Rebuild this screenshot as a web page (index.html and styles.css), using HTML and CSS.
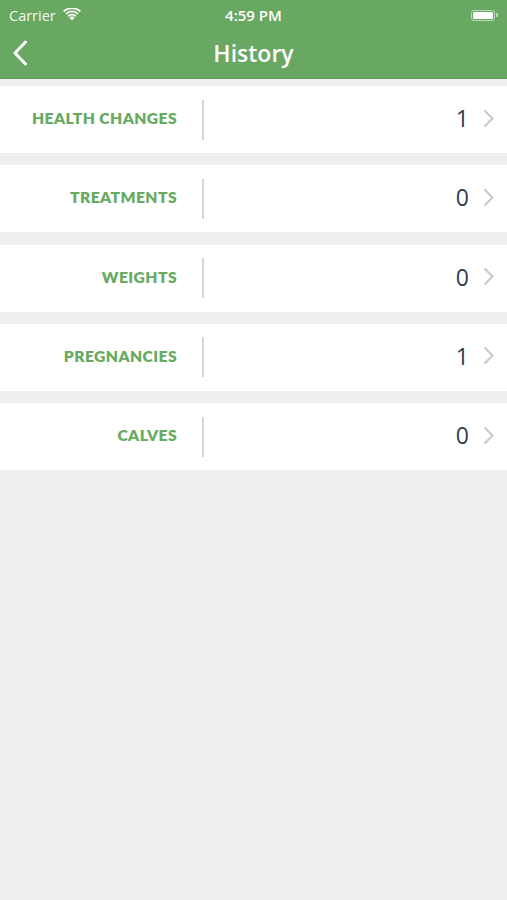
FILE: index.html
```html
<!DOCTYPE html>
<html lang="en">
<head>
    <meta charset="UTF-8">
    <meta name="viewport" content="width=device-width, initial-scale=1.0">
    <title>History</title>
    <link rel="stylesheet" href="styles.css">
</head>
<body>
    <div class="header">
        <div class="status-bar">
            <div class="status-left">
                <span>Carrier</span>
                <svg class="wifi" width="18" height="13" viewBox="0 0 18 13">
                    <path d="M9 12.5 L6.4 9.6 A3.8 3.8 0 0 1 11.6 9.6 Z" fill="#fff"/>
                    <path d="M4.6 7.6 A6.4 6.4 0 0 1 13.4 7.6 L12.2 8.9 A4.6 4.6 0 0 0 5.8 8.9 Z" fill="#fff"/>
                    <path d="M2.3 5.2 A9.8 9.8 0 0 1 15.7 5.2 L14.5 6.5 A8 8 0 0 0 3.5 6.5 Z" fill="#fff"/>
                    <path d="M0 2.8 A13.2 13.2 0 0 1 18 2.8 L16.8 4.1 A11.4 11.4 0 0 0 1.2 4.1 Z" fill="#fff"/>
                </svg>
            </div>
            <div class="status-time">4:59 PM</div>
            <div class="status-right">
                <div class="battery"><div class="battery-fill"></div></div>
                <div class="battery-tip"></div>
            </div>
        </div>
        <div class="nav-bar">
            <svg class="back" width="16" height="26" viewBox="0 0 16 26">
                <path d="M13.5 2 L3 13 L13.5 24" fill="none" stroke="#fff" stroke-width="3" stroke-linecap="round" stroke-linejoin="round"/>
            </svg>
            <h1>History</h1>
        </div>
    </div>

    <div class="list">
        <div class="row">
            <div class="label">HEALTH CHANGES</div>
            <div class="divider"></div>
            <div class="count">1</div>
            <svg class="chevron" width="11" height="19" viewBox="0 0 11 19"><path d="M1.5 1.5 L9.5 9.5 L1.5 17.5" fill="none" stroke="#c8c8cc" stroke-width="2"/></svg>
        </div>
        <div class="row">
            <div class="label">TREATMENTS</div>
            <div class="divider"></div>
            <div class="count">0</div>
            <svg class="chevron" width="11" height="19" viewBox="0 0 11 19"><path d="M1.5 1.5 L9.5 9.5 L1.5 17.5" fill="none" stroke="#c8c8cc" stroke-width="2"/></svg>
        </div>
        <div class="row">
            <div class="label">WEIGHTS</div>
            <div class="divider"></div>
            <div class="count">0</div>
            <svg class="chevron" width="11" height="19" viewBox="0 0 11 19"><path d="M1.5 1.5 L9.5 9.5 L1.5 17.5" fill="none" stroke="#c8c8cc" stroke-width="2"/></svg>
        </div>
        <div class="row">
            <div class="label">PREGNANCIES</div>
            <div class="divider"></div>
            <div class="count">1</div>
            <svg class="chevron" width="11" height="19" viewBox="0 0 11 19"><path d="M1.5 1.5 L9.5 9.5 L1.5 17.5" fill="none" stroke="#c8c8cc" stroke-width="2"/></svg>
        </div>
        <div class="row">
            <div class="label">CALVES</div>
            <div class="divider"></div>
            <div class="count">0</div>
            <svg class="chevron" width="11" height="19" viewBox="0 0 11 19"><path d="M1.5 1.5 L9.5 9.5 L1.5 17.5" fill="none" stroke="#c8c8cc" stroke-width="2"/></svg>
        </div>
    </div>
</body>
</html>
```

FILE: styles.css
```css
body {
    margin: 0;
    background-color: #efefef;
    font-family: "Open Sans", "Liberation Sans", sans-serif;
    height: 900px;
}
.header {
    background-color: #68a862;
    color: #fff;
}
.status-bar {
    height: 30px;
    display: flex;
    align-items: center;
    justify-content: space-between;
    padding: 0 9px;
    position: relative;
}
.status-left {
    display: flex;
    align-items: center;
    gap: 7px;
    font-size: 14.5px;
    color: #f3f8f2;
}
.wifi {
    margin-top: -2px;
}
.status-time {
    position: absolute;
    left: 0;
    right: 0;
    text-align: center;
    font-size: 15px;
    font-weight: 600;
}
.status-right {
    display: flex;
    align-items: center;
}
.battery {
    width: 24px;
    height: 11px;
    border: 1px solid rgba(255,255,255,0.55);
    border-radius: 3px;
    padding: 1px;
    box-sizing: border-box;
}
.battery-fill {
    width: 100%;
    height: 100%;
    background-color: #fff;
    border-radius: 1.5px;
}
.battery-tip {
    width: 2px;
    height: 4px;
    background-color: rgba(255,255,255,0.55);
    border-radius: 0 1px 1px 0;
    margin-left: 1px;
}
.nav-bar {
    height: 48px;
    display: flex;
    align-items: center;
    justify-content: center;
    position: relative;
    border-bottom: 1px solid #5f9d59;
}
.back {
    position: absolute;
    left: 12px;
    top: 10px;
}
.nav-bar h1 {
    margin: 0;
    font-size: 23px;
    font-weight: 600;
    padding-bottom: 3px;
}
.list {
    padding-top: 7px;
}
.row {
    height: 67px;
    margin-bottom: 12.25px;
    background-color: #fff;
    display: flex;
    align-items: center;
    box-sizing: border-box;
    padding-bottom: 3px;
}
.label {
    width: 177px;
    text-align: right;
    color: #67aa61;
    font-family: Lato, "Liberation Sans", sans-serif;
    font-weight: 800;
    font-size: 15.7px;
    letter-spacing: 0.4px;
}
.divider {
    width: 2px;
    height: 40px;
    background-color: #d6d6d6;
    margin-left: 25px;
    margin-top: 3px;
}
.count {
    flex: 1;
    text-align: right;
    font-size: 23px;
    color: #2f3e4e;
    padding-right: 14px;
}
.chevron {
    margin-right: 13px;
}
```
